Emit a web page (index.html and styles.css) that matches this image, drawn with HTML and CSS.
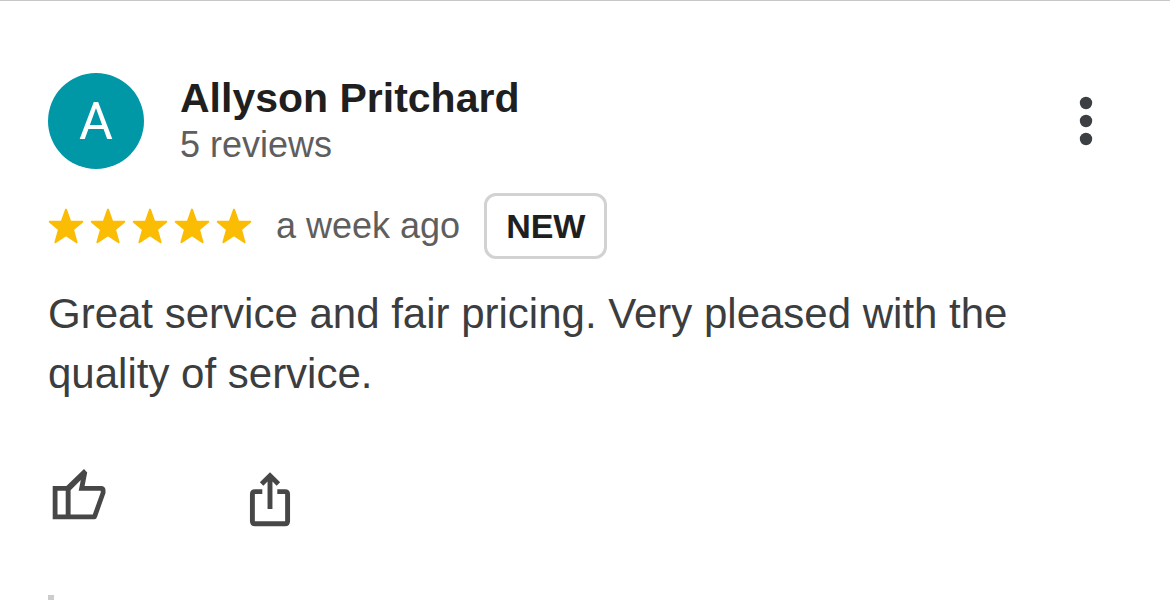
FILE: index.html
```html
<!DOCTYPE html>
<html lang="en">
<head>
    <meta charset="UTF-8">
    <meta name="viewport" content="width=device-width, initial-scale=1.0">
    <title>Reviews</title>
    <link rel="stylesheet" href="styles.css">
</head>
<body>
    <article class="review">
        <header class="review-header">
            <div class="avatar">A</div>
            <div class="author">
                <div class="author-name">Allyson Pritchard</div>
                <div class="author-count">5 reviews</div>
            </div>
            <button class="icon-button menu-button" type="button" aria-label="More options">
                <svg width="14" height="50" viewBox="0 0 14 50" fill="#3c4043">
                    <circle cx="7" cy="7" r="6.2"/>
                    <circle cx="7" cy="25" r="6.2"/>
                    <circle cx="7" cy="43" r="6.2"/>
                </svg>
            </button>
        </header>

        <div class="rating-row">
            <div class="stars" role="img" aria-label="5 out of 5 stars">
                <svg class="star" viewBox="0 0 36 36"><path d="M18 1.6 22.3 13.8H34.3L25 21.6 28.6 34.2 18 27.2 7.4 34.2 11 21.6 1.7 13.8H13.7Z"/></svg>
                <svg class="star" viewBox="0 0 36 36"><path d="M18 1.6 22.3 13.8H34.3L25 21.6 28.6 34.2 18 27.2 7.4 34.2 11 21.6 1.7 13.8H13.7Z"/></svg>
                <svg class="star" viewBox="0 0 36 36"><path d="M18 1.6 22.3 13.8H34.3L25 21.6 28.6 34.2 18 27.2 7.4 34.2 11 21.6 1.7 13.8H13.7Z"/></svg>
                <svg class="star" viewBox="0 0 36 36"><path d="M18 1.6 22.3 13.8H34.3L25 21.6 28.6 34.2 18 27.2 7.4 34.2 11 21.6 1.7 13.8H13.7Z"/></svg>
                <svg class="star" viewBox="0 0 36 36"><path d="M18 1.6 22.3 13.8H34.3L25 21.6 28.6 34.2 18 27.2 7.4 34.2 11 21.6 1.7 13.8H13.7Z"/></svg>
            </div>
            <span class="date">a week ago</span>
            <span class="badge">NEW</span>
        </div>

        <p class="review-text">Great service and fair pricing. Very pleased with the quality of service.</p>

        <div class="actions">
            <button class="icon-button" type="button" aria-label="Like">
                <svg width="60" height="60" viewBox="8 7 60 60" fill="#474747" fill-rule="evenodd">
                    <path d="M12.7 26H26.4L44 9 47.2 12.5 44.6 26H61Q65.5 26 65.5 30.5V33L57 57Q56.3 59.2 54.5 59.2H12.7ZM17.5 30.8V54.4H25.7V30.8ZM30.6 30.2V54.4H52.8L60.7 32.5V30.8H38.7L40.8 20Z"/>
                </svg>
            </button>
            <button class="icon-button" type="button" aria-label="Share">
                <svg width="60" height="60" viewBox="5 7 60 60" fill="none" stroke="#474747" stroke-width="4.9">
                    <path d="M27.3 31.6H20Q17.4 31.6 17.4 34.2V61Q17.4 63.8 20 63.8H50Q52.6 63.8 52.6 61V34.2Q52.6 31.6 50 31.6H42.3"/>
                    <path d="M35 49V16M26.6 24 35 15.6 43.4 24"/>
                </svg>
            </button>
        </div>

        <!-- Owner reply -->
        <div class="reply"></div>
    </article>
</body>
</html>
```
FILE: styles.css
```css
* {
    box-sizing: border-box;
}

body {
    margin: 0;
    background-color: #fff;
    color: #3c3d3f;
    font-family: "Liberation Sans", Arial, sans-serif;
}

.review {
    display: flex;
    flex-direction: column;
    min-height: 100vh;
    padding: 72px 48px 0;
    border-top: 1px solid #c8c8c8;
}

.review-header {
    display: flex;
    align-items: center;
    gap: 36px;
}

.avatar {
    display: flex;
    align-items: center;
    justify-content: center;
    width: 96px;
    height: 96px;
    border-radius: 50%;
    background-color: #0097a7;
    color: #fff;
    font-family: Roboto, sans-serif;
    font-size: 52px;
}

.author {
    flex: 1;
}

.author-name {
    color: #1f1f1f;
    font-size: 41px;
    font-weight: bold;
    line-height: 48px;
}

.author-count {
    color: #5e5e5e;
    font-size: 36px;
    line-height: 46px;
}

.icon-button {
    display: flex;
    padding: 0;
    border: none;
    background: none;
    cursor: pointer;
}

.menu-button {
    padding: 0 29px;
}

.rating-row {
    display: flex;
    align-items: center;
    gap: 24px;
    margin-top: 24px;
}

.stars {
    display: flex;
    gap: 6px;
}

.star {
    width: 36px;
    height: 36px;
    fill: #fbbc04;
    stroke: #fbbc04;
    stroke-width: 2;
    stroke-linejoin: round;
}

.date {
    color: #5e5e5e;
    font-size: 36px;
}

.badge {
    padding: 0 19px;
    border: 3px solid #d2d2d2;
    border-radius: 12px;
    color: #1f1f1f;
    font-size: 34px;
    font-weight: bold;
    line-height: 60px;
}

.review-text {
    margin: 25px 0 0;
    font-size: 42px;
    line-height: 60px;
}

.actions {
    display: flex;
    gap: 132px;
    margin-top: 63px;
}

.reply {
    flex: 1;
    margin-top: 68px;
    border-left: 6px solid #ccc;
}
```
